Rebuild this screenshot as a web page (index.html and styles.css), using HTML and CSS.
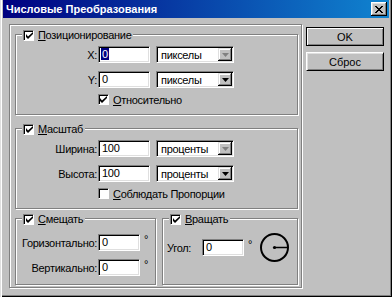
FILE: index.html
```html
<!DOCTYPE html>
<html lang="ru">
<head>
<meta charset="utf-8">
<title>Числовые Преобразования</title>
<link rel="stylesheet" href="styles.css">
</head>
<body>
<div class="window">
  <div class="titlebar">
    <span class="title">Числовые Преобразования</span>
    <span class="close"><svg width="8" height="7" viewBox="0 0 8 7"><path d="M0 0h2v1h-2zM6 0h2v1h-2zM1 1h2v1h-2zM5 1h2v1h-2zM2 2h4v1h-4zM3 3h2v1h-2zM2 4h4v1h-4zM1 5h2v1h-2zM5 5h2v1h-2zM0 6h2v1h-2zM6 6h2v1h-2z" fill="#000"/></svg></span>
  </div>
  <div class="content">
    <div class="panel">
      <fieldset class="group">
        <legend><span class="cb on"><svg width="7" height="7" viewBox="0 0 7 7"><path d="M0 2v3l2 2l5-5v-2l-5 4.5z" fill="#000"/></svg></span><span><u>П</u>озиционирование</span></legend>
        <div class="row"><span class="lbl">X:</span><span class="field"><span class="sel">0</span></span><span class="combo"><span>пикселы</span><span class="arrow dim"><svg width="7" height="4" viewBox="0 0 7 4"><path d="M0 0h7l-3.5 4z" fill="#808080"/></svg></span></span></div>
        <div class="row"><span class="lbl">Y:</span><span class="field">0</span><span class="combo"><span>пикселы</span><span class="arrow"><svg width="7" height="4" viewBox="0 0 7 4"><path d="M0 0h7l-3.5 4z" fill="#000"/></svg></span></span></div>
        <div class="check-row"><span class="cb on"><svg width="7" height="7" viewBox="0 0 7 7"><path d="M0 2v3l2 2l5-5v-2l-5 4.5z" fill="#000"/></svg></span><span><u>О</u>тносительно</span></div>
      </fieldset>
      <fieldset class="group">
        <legend><span class="cb on"><svg width="7" height="7" viewBox="0 0 7 7"><path d="M0 2v3l2 2l5-5v-2l-5 4.5z" fill="#000"/></svg></span><span><u>М</u>асштаб</span></legend>
        <div class="row"><span class="lbl">Ширина:</span><span class="field">100</span><span class="combo"><span>проценты</span><span class="arrow dim"><svg width="7" height="4" viewBox="0 0 7 4"><path d="M0 0h7l-3.5 4z" fill="#808080"/></svg></span></span></div>
        <div class="row"><span class="lbl">Высота:</span><span class="field">100</span><span class="combo"><span>проценты</span><span class="arrow"><svg width="7" height="4" viewBox="0 0 7 4"><path d="M0 0h7l-3.5 4z" fill="#000"/></svg></span></span></div>
        <div class="check-row"><span class="cb"></span><span><u>С</u>облюдать Пропорции</span></div>
      </fieldset>
      <div class="split">
        <fieldset class="group g3">
          <legend><span class="cb on"><svg width="7" height="7" viewBox="0 0 7 7"><path d="M0 2v3l2 2l5-5v-2l-5 4.5z" fill="#000"/></svg></span><span><u>С</u>мещать</span></legend>
          <div class="row"><span class="lbl">Горизонтально:</span><span class="field short">0</span><span class="deg">°</span></div>
          <div class="row"><span class="lbl">Вертикально:</span><span class="field short">0</span><span class="deg">°</span></div>
        </fieldset>
        <fieldset class="group g4">
          <legend><span class="cb on"><svg width="7" height="7" viewBox="0 0 7 7"><path d="M0 2v3l2 2l5-5v-2l-5 4.5z" fill="#000"/></svg></span><span><u>В</u>ращать</span></legend>
          <div class="angle-row"><span class="alabel">Угол:</span><span class="field short">0</span><span class="deg">°</span>
            <svg class="dial" width="31" height="31" viewBox="0 0 31 31"><circle cx="15.5" cy="15.5" r="13.5" fill="none" stroke="#000" stroke-width="2"/><line x1="15.5" y1="15.5" x2="29" y2="15.5" stroke="#000" stroke-width="1.5"/><circle cx="15.5" cy="15.5" r="1.6" fill="#000"/></svg>
          </div>
        </fieldset>
      </div>
    </div>
    <div class="buttons">
      <button class="btn default">OK</button>
      <button class="btn">Сброс</button>
    </div>
  </div>
</div>
</body>
</html>
```
FILE: styles.css
```css
* { box-sizing: border-box; }
html, body { margin: 0; padding: 0; }
body {
  width: 392px; height: 297px; overflow: hidden;
  background: #c0c0c0;
  font-family: "Liberation Sans", Arial, sans-serif;
  font-size: 11px; color: #000;
  letter-spacing: -0.3px;
}
.window {
  width: 392px; height: 297px;
  background: #c0c0c0;
  padding: 0 3px 4px 3px;
  box-shadow: inset 1px 0 #dfdfdf, inset 2px 0 #fff, inset -1px -1px #000, inset -2px -2px #808080;
  display: flex; flex-direction: column;
}
.titlebar {
  height: 18px;
  display: flex; align-items: center; justify-content: space-between;
  padding: 0 2px 0 3px;
  background: linear-gradient(90deg, #000080 0%, #1084d0 100%);
  color: #fff; font-weight: bold; font-size: 11px; letter-spacing: 0;
}
.close {
  width: 16px; height: 14px;
  background: #c0c0c0;
  display: flex; align-items: center; justify-content: center;
  box-shadow: inset -1px -1px #000, inset 1px 1px #fff, inset -2px -2px #808080, inset 2px 2px #dfdfdf;
}
.content { display: flex; padding: 6px 0 0 6px; }
.panel {
  width: 293px; height: 264px;
  border: 1px solid #808080;
  box-shadow: inset 1px 1px #fff, 1px 1px #fff;
  padding: 3px 3px 0 5px;
}
.group {
  margin: 0; min-width: 0;
  padding: 5px 0 8px 0;
  border: 1px solid #808080;
  box-shadow: inset 1px 1px #fff, 1px 1px #fff;
}
.group + .group { margin-top: 7px; }
legend {
  margin-left: 6px;
  padding: 0 2px 0 1px;
  height: 13px; line-height: 13px;
  background: #c0c0c0;
  white-space: nowrap;
}
legend > span, .check-row > span { display: inline-block; vertical-align: middle; }
legend .cb { margin-right: 4px; }
.cb {
  width: 11px; height: 11px; background: #fff;
  border-top: 1px solid #808080; border-left: 1px solid #808080;
  border-right: 1px solid #fff; border-bottom: 1px solid #fff;
  box-shadow: inset 1px 1px #000;
  display: inline-flex; align-items: center; justify-content: center;
  padding: 1px 0 0 1px;
}
.cb svg { display: block; }
.row { display: flex; align-items: center; height: 17px; }
.row + .row { margin-top: 8px; }
.lbl { width: 82px; padding-right: 1px; text-align: right; white-space: nowrap; flex: none; }
.field {
  width: 52px; height: 17px; flex: none;
  background: #fff;
  border-top: 1px solid #808080; border-left: 1px solid #808080;
  border-right: 1px solid #fff; border-bottom: 1px solid #fff;
  box-shadow: inset 1px 1px #000, inset -1px -1px #dfdfdf;
  padding-left: 3px; line-height: 15px;
}
.field.short { width: 42px; }
.sel { background: #000080; color: #fff; padding: 0 1px; margin-left: -1px; }
.combo {
  margin-left: 6px; width: 78px; height: 17px; flex: none;
  background: #fff;
  border-top: 1px solid #808080; border-left: 1px solid #808080;
  border-right: 1px solid #fff; border-bottom: 1px solid #fff;
  box-shadow: inset 1px 1px #000, inset -1px -1px #dfdfdf;
  display: flex; align-items: center; justify-content: space-between;
  padding: 1px 1px 1px 4px;
}
.arrow {
  width: 14px; height: 13px;
  background: #c0c0c0;
  box-shadow: inset -1px -1px #000, inset 1px 1px #dfdfdf, inset -2px -2px #808080, inset 2px 2px #fff;
  display: flex; align-items: center; justify-content: center;
}
.arrow svg { display: block; }
.check-row { display: flex; align-items: center; height: 13px; margin: 5px 0 0 82px; }
.check-row .cb { margin-right: 4px; }
.deg { margin-left: 4px; align-self: flex-start; line-height: 10px; }
.split { display: flex; align-items: stretch; gap: 6px; margin-top: 3px; }
.g3 { width: 141px; flex: none; padding-top: 9px; }
.split .g4 { flex: 1; margin-top: 0; padding: 1px 0 8px 0; }
.angle-row { display: flex; align-items: center; height: 31px; padding-left: 4px; margin: 6px 0 13px 0; }
.alabel { width: 35px; flex: none; }
.angle-row .deg { margin-left: 4px; align-self: center; margin-top: -8px; }
.dial { margin-left: 7px; display: block; }
.buttons { display: flex; flex-direction: column; gap: 6px; margin-left: 4px; padding-top: 3px; }
.btn {
  width: 78px; height: 19px; padding: 0;
  font: 11px "Liberation Sans", Arial, sans-serif; color: #000;
  background: #c0c0c0;
  border-top: 1px solid #fff; border-left: 1px solid #fff;
  border-right: 1px solid #000; border-bottom: 1px solid #000;
  box-shadow: inset 1px 1px #dfdfdf, inset -1px -1px #808080;
}
.btn.default {
  border: 1px solid #000;
  box-shadow: inset 1px 1px #fff, inset -1px -1px #808080;
}
```
